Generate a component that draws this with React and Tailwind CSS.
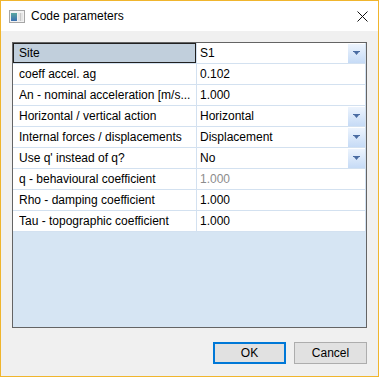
import React from "react";

// property rows of the grid
const rows = [
  { name: "Site", value: "S1", combo: true, selected: true },
  { name: "coeff accel. ag", value: "0.102" },
  { name: "An - nominal acceleration [m/s...", value: "1.000" },
  { name: "Horizontal / vertical action", value: "Horizontal", combo: true },
  { name: "Internal forces / displacements", value: "Displacement", combo: true },
  { name: "Use q' instead of q?", value: "No", combo: true },
  { name: "q - behavioural coefficient", value: "1.000", disabled: true },
  { name: "Rho - damping coefficient", value: "1.000" },
  { name: "Tau - topographic coefficient", value: "1.000" },
];

const AppIcon = () => (
  <svg width="16" height="13" viewBox="0 0 16 13">
    <defs>
      <linearGradient id="ig" x1="0" y1="0" x2="0" y2="1">
        <stop offset="0" stopColor="#5aa7a0" />
        <stop offset="1" stopColor="#3a6fb0" />
      </linearGradient>
    </defs>
    <rect x="0.5" y="0.5" width="15" height="12" fill="#f2f2f2" stroke="#a6a6a6" />
    <rect x="2" y="3" width="6" height="8" fill="url(#ig)" />
    <rect x="9" y="3" width="5" height="8" fill="#e4e4e4" />
    <rect x="11" y="3" width="1" height="8" fill="#c8c8c8" />
  </svg>
);

const CloseIcon = () => (
  <svg width="11" height="11" viewBox="0 0 11 11">
    <path d="M0.5 0.5 L10.5 10.5 M10.5 0.5 L0.5 10.5" stroke="#111" strokeWidth="1" />
  </svg>
);

const ComboButton = () => (
  <div className="ml-auto flex h-[19px] w-[17px] shrink-0 items-center justify-center bg-gradient-to-b from-[#edf4fd] to-[#c6dbf6]">
    <svg width="7" height="4" viewBox="0 0 7 4">
      <path d="M0 0h7v1H6L3.5 4L1 1H0z" fill="#4a6ca2" />
    </svg>
  </div>
);

function App() {
  return (
    <div
      className="flex h-[377px] w-[379px] flex-col border border-[#f0b52d] bg-[#f0f0f0] text-[12px] text-black"
      style={{ fontFamily: '"Liberation Sans", Arial, sans-serif' }}
    >
      {/* title bar */}
      <div className="flex h-[30px] shrink-0 items-center bg-white pl-[8px] pr-[10px]">
        <AppIcon />
        <span className="ml-[6px]">Code parameters</span>
        <div className="ml-auto flex items-center">
          <CloseIcon />
        </div>
      </div>

      <div className="flex flex-1 flex-col p-[11px] pb-[12px]">
        {/* property grid */}
        <div className="flex h-[286px] flex-col border border-[#646464] bg-[#d6e5f3]">
          {rows.map((r) => (
            <div
              key={r.name}
              className="flex h-[21px] shrink-0 border-b border-[#d3e1f0] bg-white"
            >
              <div
                className={
                  r.selected
                    ? "flex w-[183px] shrink-0 items-center border border-[#202020] bg-[#c1cfdc] pl-[5px]"
                    : "flex w-[183px] shrink-0 items-center pl-[6px]"
                }
              >
                <span className="truncate pr-[2px]">{r.name}</span>
              </div>
              <div className="flex flex-1 items-center border-l border-r border-[#d3e1f0] pl-[3px]">
                <span className={r.disabled ? "text-[#8c8c8c]" : ""}>{r.value}</span>
                {r.combo && <ComboButton />}
              </div>
            </div>
          ))}
        </div>

        {/* buttons */}
        <div className="mt-auto flex justify-end gap-[8px]">
          <button className="flex h-[22px] w-[73px] items-center justify-center border-2 border-[#0078d7] bg-[#e1e1e1]">
            OK
          </button>
          <button className="flex h-[22px] w-[73px] items-center justify-center border border-[#adadad] bg-[#e1e1e1]">
            Cancel
          </button>
        </div>
      </div>
    </div>
  );
}

export default App;
